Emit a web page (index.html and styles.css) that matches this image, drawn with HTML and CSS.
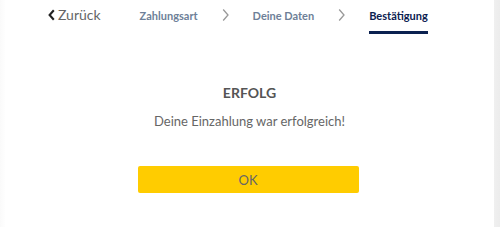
FILE: index.html
```html
<!DOCTYPE html>
<html lang="de">
<head>
<meta charset="utf-8">
<link rel="stylesheet" href="styles.css">
</head>
<body>
<div class="page">
  <header class="topbar">
    <a class="back" href="#">
      <svg class="back-icon" width="7" height="12" viewBox="0 0 7 12"><path d="M5.8 1.2 L1.6 6 L5.8 10.8" fill="none" stroke="#222" stroke-width="2.1"/></svg>
      <span>Zurück</span>
    </a>
    <nav class="steps">
      <span class="step">Zahlungsart</span>
      <svg class="sep" width="7" height="14" viewBox="0 0 7 14"><path d="M1.2 1.5 L6 7 L1.2 12.5" fill="none" stroke="#999" stroke-width="1.3"/></svg>
      <span class="step">Deine Daten</span>
      <svg class="sep" width="7" height="14" viewBox="0 0 7 14"><path d="M1.2 1.5 L6 7 L1.2 12.5" fill="none" stroke="#999" stroke-width="1.3"/></svg>
      <span class="step active">Bestätigung</span>
    </nav>
  </header>
  <main class="content">
    <h1 class="title">ERFOLG</h1>
    <p class="message">Deine Einzahlung war erfolgreich!</p>
    <button class="ok">OK</button>
  </main>
</div>
</body>
</html>
```
FILE: styles.css
```css
html, body {
  margin: 0;
  padding: 0;
  background: #fff;
}
body {
  width: 500px;
  height: 227px;
  overflow: hidden;
  font-family: "Lato", "Liberation Sans", sans-serif;
  background: linear-gradient(to right, #fafafa 0, #fff 6px, #fff 493px, #f0f0f0 494px, #ececec 500px);
}
.page {
  height: 227px;
  margin-left: 5px;
  margin-right: 6px;
  background: #fff;
}
.topbar {
  display: flex;
  align-items: flex-start;
  padding-top: 5px;
  height: 40px;
  box-sizing: border-box;
}
.back {
  display: flex;
  align-items: center;
  gap: 3px;
  margin-left: 43px;
  color: #666;
  text-decoration: none;
  font-size: 14px;
  line-height: 20px;
}
.steps {
  display: flex;
  align-items: flex-start;
  margin-left: 39px;
}
.step {
  font-size: 11px;
  font-weight: 700;
  color: #6e7f98;
  line-height: 22px;
  padding-bottom: 4px;
  border-bottom: 3px solid transparent;
}
.step.active {
  color: #0b2150;
  border-bottom-color: #0b2150;
}
.sep {
  margin: 3px 24px 0 24px;
}
.content {
  display: flex;
  flex-direction: column;
  align-items: center;
  padding-top: 43px;
}
.title {
  margin: 0;
  font-size: 14px;
  font-weight: 700;
  color: #555;
  line-height: 20px;
}
.message {
  margin: 9px 0 0;
  font-size: 13px;
  color: #666;
  line-height: 18px;
}
.ok {
  margin-top: 36px;
  width: 221px;
  height: 27px;
  border: 0;
  border-radius: 2px;
  background: #ffcc00;
  color: #666;
  font-family: inherit;
  font-size: 13px;
  margin-left: -3px;
}
```
